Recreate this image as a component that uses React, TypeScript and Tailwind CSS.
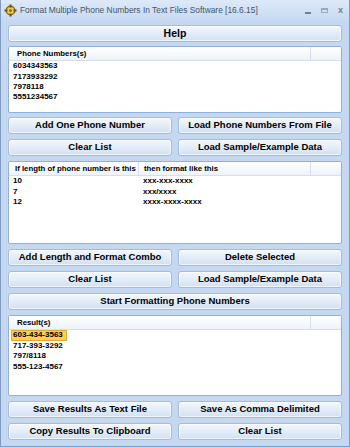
import React from "react";

const font = { fontFamily: '"Liberation Sans", Arial, sans-serif' };

const Btn: React.FC<{ label: string; big?: boolean }> = ({ label, big }) => (
  <div
    className={`flex items-center justify-center whitespace-nowrap rounded-[3px] border border-[#a3bcdc] bg-gradient-to-b from-[#f3f7fc] via-[#e3edf8] to-[#d0e0f3] shadow-[inset_0_0_0_1px_rgba(255,255,255,0.7)] font-bold text-black ${
      big ? "text-[10.5px]" : "text-[9.5px]"
    } h-[17px]`}
  >
    {label}
  </div>
);

const Header: React.FC<{ cols: { label: string; w: string }[] }> = ({ cols }) => (
  <div className="flex h-[14px] shrink-0 border-b border-[#d5e0ee] bg-gradient-to-b from-white to-[#eef3f9] text-[7.8px] font-bold text-black">
    {cols.map((c, i) => (
      <div
        key={i}
        className={`flex items-center whitespace-nowrap border-r border-[#d6e0ec] ${c.w}`}
      >
        {c.label}
      </div>
    ))}
    <div className="flex-1" />
  </div>
);

export default function App() {
  return (
    <div
      className="relative h-[447px] w-[350px] overflow-hidden border-x border-b border-[#7f9cc4] bg-[#c4d8f1]"
      style={font}
    >
      {/* title bar */}
      <div className="flex h-[21px] items-center bg-gradient-to-b from-[#dde9f8] to-[#c6daf2] pl-[3px] pr-[6px]">
        <svg width="13" height="13" viewBox="0 0 13 13" className="shrink-0">
          <circle cx="6.5" cy="6.5" r="5" fill="#8a6a2a" />
          <circle cx="6.5" cy="6.5" r="3.6" fill="#f2c94c" />
          <rect x="5.5" y="0.5" width="2" height="3" fill="#6b4f1d" />
          <rect x="5.5" y="9.5" width="2" height="3" fill="#6b4f1d" />
          <rect x="0.5" y="5.5" width="3" height="2" fill="#6b4f1d" />
          <rect x="9.5" y="5.5" width="3" height="2" fill="#6b4f1d" />
          <circle cx="6.5" cy="6.5" r="1.5" fill="#5a8a3a" />
        </svg>
        <div className="ml-[3px] flex-1 truncate text-[8.4px] text-[#45556a]">
          Format Multiple Phone Numbers In Text Files Software [16.6.15]
        </div>
        <div className="flex items-center gap-[10px] text-[#6f7f92]">
          <div className="mt-[5px] h-[1.5px] w-[6px] bg-[#6f7f92]" />
          <div className="h-[5px] w-[7px] border border-t-2 border-[#9aa8b8]" />
          <div className="text-[9px] font-bold leading-none">x</div>
        </div>
      </div>

      <div className="flex flex-col px-[7px] pt-[4px]">
        <Btn label="Help" big />

        {/* phone numbers list */}
        <div className="mt-[4px] flex h-[67px] flex-col rounded-[2px] border border-[#8fb0d9] bg-white">
          <Header cols={[{ label: "Phone Numbers(s)", w: "w-[302px] pl-[8px]" }]} />
          <div className="pl-[4px] text-[8px] font-bold text-black">
            {["6034343563", "7173933292", "7978118", "5551234567"].map((n) => (
              <div key={n} className="flex h-[10.4px] items-center">
                {n}
              </div>
            ))}
          </div>
        </div>

        <div className="mt-[4px] grid grid-cols-2 gap-x-[6px] gap-y-[5px]">
          <Btn label="Add One Phone Number" />
          <Btn label="Load Phone Numbers From File" />
          <Btn label="Clear List" />
          <Btn label="Load Sample/Example Data" />
        </div>

        {/* format list */}
        <div className="mt-[5px] flex h-[83px] flex-col rounded-[2px] border border-[#8fb0d9] bg-white">
          <Header
            cols={[
              { label: "If length of phone number is this", w: "w-[130px] pl-[6px]" },
              { label: "then format like this", w: "w-[172px] pl-[5px]" },
            ]}
          />
          <div className="text-[8px] font-bold text-black">
            {[
              ["10", "xxx-xxx-xxxx"],
              ["7", "xxx/xxxx"],
              ["12", "xxxx-xxxx-xxxx"],
            ].map(([a, b]) => (
              <div key={a} className="flex h-[10.5px] items-center">
                <div className="w-[130px] pl-[4px]">{a}</div>
                <div className="pl-[4px]">{b}</div>
              </div>
            ))}
          </div>
        </div>

        <div className="mt-[5px] grid grid-cols-2 gap-x-[6px] gap-y-[5px]">
          <Btn label="Add Length and Format Combo" />
          <Btn label="Delete Selected" />
          <Btn label="Clear List" />
          <Btn label="Load Sample/Example Data" />
        </div>

        <div className="mt-[5px]">
          <Btn label="Start Formatting Phone Numbers" />
        </div>

        {/* results list */}
        <div className="mt-[5px] flex h-[81px] flex-col rounded-[2px] border border-[#8fb0d9] bg-white">
          <Header cols={[{ label: "Result(s)", w: "w-[302px] pl-[8px]" }]} />
          <div className="pl-[2px] text-[8px] font-bold text-black">
            {["603-434-3563", "717-393-3292", "797/8118", "555-123-4567"].map((n, i) => (
              <div key={n} className="flex h-[10.6px] items-center">
                <span
                  className={
                    i === 0
                      ? "flex h-[11px] w-[56px] items-center border border-[#e2a92a] bg-[#fbcf55] pl-[1px]"
                      : "pl-[2px]"
                  }
                >
                  {n}
                </span>
              </div>
            ))}
          </div>
        </div>

        <div className="mt-[5px] grid grid-cols-2 gap-x-[6px] gap-y-[5px]">
          <Btn label="Save Results As Text File" />
          <Btn label="Save As Comma Delimited" />
          <Btn label="Copy Results To Clipboard" />
          <Btn label="Clear List" />
        </div>
      </div>
    </div>
  );
}
